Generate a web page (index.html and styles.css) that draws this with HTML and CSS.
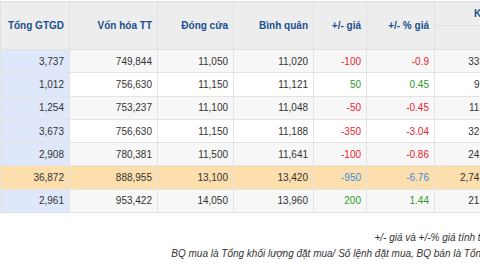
FILE: index.html
```html
<!DOCTYPE html>
<html lang="vi">
<head>
<meta charset="utf-8">
<link rel="stylesheet" href="styles.css">
</head>
<body>
<div class="page">
  <table class="grid">
    <colgroup>
      <col class="c1"><col class="c2"><col class="c3"><col class="c4"><col class="c5"><col class="c6"><col class="c7"><col class="c8">
    </colgroup>
    <thead>
      <tr>
        <th rowspan="2">Tổng GTGD</th>
        <th rowspan="2">Vốn hóa TT</th>
        <th rowspan="2">Đóng cửa</th>
        <th rowspan="2">Bình quân</th>
        <th rowspan="2">+/- giá</th>
        <th rowspan="2">+/- % giá</th>
        <th colspan="2" class="group">Khối lượng</th>
      </tr>
      <tr>
        <th class="sub"></th>
        <th class="sub"></th>
      </tr>
    </thead>
    <tbody>
      <tr class="alt"><td class="first">3,737</td><td>749,844</td><td>11,050</td><td>11,020</td><td class="dn">-100</td><td class="dn">-0.9</td><td>339</td><td>0</td></tr>
      <tr><td class="first">1,012</td><td>756,630</td><td>11,150</td><td>11,121</td><td class="up">50</td><td class="up">0.45</td><td>91</td><td>0</td></tr>
      <tr class="alt"><td class="first">1,254</td><td>753,237</td><td>11,100</td><td>11,048</td><td class="dn">-50</td><td class="dn">-0.45</td><td>113</td><td>0</td></tr>
      <tr><td class="first">3,673</td><td>756,630</td><td>11,150</td><td>11,188</td><td class="dn">-350</td><td class="dn">-3.04</td><td>324</td><td>0</td></tr>
      <tr class="alt"><td class="first">2,908</td><td>780,381</td><td>11,500</td><td>11,641</td><td class="dn">-100</td><td class="dn">-0.86</td><td>241</td><td>0</td></tr>
      <tr class="hl"><td class="first">36,872</td><td>888,955</td><td>13,100</td><td>13,420</td><td class="fl">-950</td><td class="fl">-6.76</td><td>2,747</td><td>0</td></tr>
      <tr class="alt"><td class="first">2,961</td><td>953,422</td><td>14,050</td><td>13,960</td><td class="up">200</td><td class="up">1.44</td><td>212</td><td>0</td></tr>
    </tbody>
  </table>
  <div class="notes">
    <p>+/- giá và +/-% giá tính theo giá tham chiếu so với phiên trước</p>
    <p>BQ mua là Tổng khối lượng đặt mua/ Số lệnh đặt mua, BQ bán là Tổng khối lượng đặt bán/ Số lệnh đặt bán</p>
  </div>
</div>
</body>
</html>
```
FILE: styles.css
```css
html, body {
  margin: 0;
  padding: 0;
  background: #ffffff;
  overflow: hidden;
}
body {
  width: 480px;
  height: 270px;
  font-family: "Liberation Sans", Arial, sans-serif;
  color: #333333;
}
.page {
  width: 720px;
  padding-top: 1px;
}
.grid {
  border-collapse: collapse;
  table-layout: fixed;
  width: 550px;
  font-size: 10px;
}
.c1 { width: 69px; }
.c2 { width: 88px; }
.c3 { width: 76px; }
.c4 { width: 80px; }
.c5 { width: 53px; }
.c6 { width: 68px; }
.c7 { width: 56px; }
.c8 { width: 60px; }

.grid th {
  background: #ededed;
  color: #1b4f8f;
  font-weight: bold;
  text-align: right;
  padding: 0 5px;
  border: 1px solid #e0e0e0;
  height: 23px;
  vertical-align: middle;
}
.grid th.group {
  text-align: left;
  padding-left: 39px;
}
.grid td {
  text-align: right;
  padding: 0 5px;
  border: 1px solid #e3e3e3;
  height: 22.3px;
  background: #ffffff;
}
.grid tr.alt td { background: #f7f7f7; }
.grid tr td.first { background: #dfe8fa; }
.grid tr.hl td { background: #fddfae; }
.grid td.dn { color: #e8232f; }
.grid td.up { color: #2f9a2f; }
.grid td.fl { color: #3b8de0; }

.notes {
  width: 648px;
  text-align: right;
  margin-top: 17px;
  font-size: 10px;
  font-style: italic;
  color: #333333;
  line-height: 16px;
}
.notes p {
  margin: 0;
  white-space: nowrap;
}
```
